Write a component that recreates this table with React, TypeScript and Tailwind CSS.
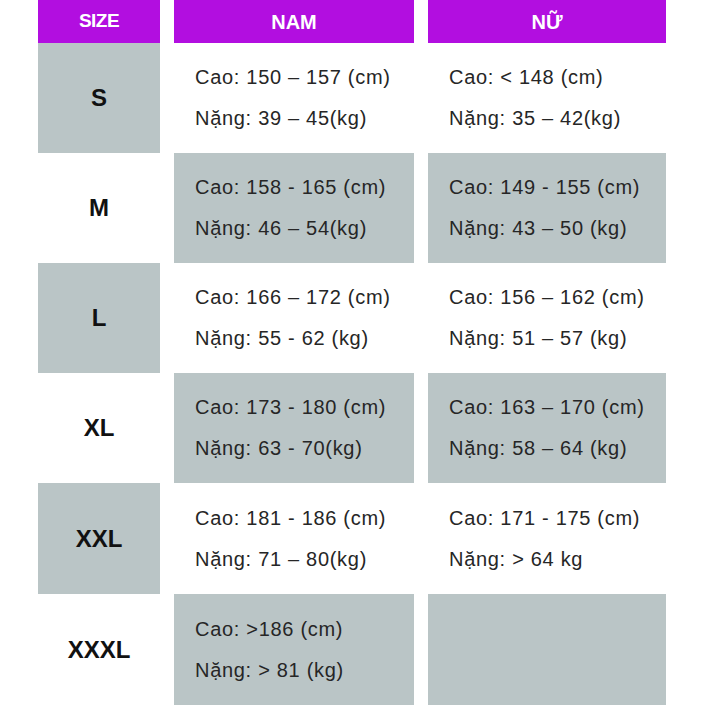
const rows = [
  { size: "S", sizeGray: true, nam: ["Cao: 150 – 157 (cm)", "Nặng: 39 – 45(kg)"], nu: ["Cao: < 148 (cm)", "Nặng: 35 – 42(kg)"] },
  { size: "M", sizeGray: false, nam: ["Cao: 158 - 165 (cm)", "Nặng: 46 – 54(kg)"], nu: ["Cao: 149 - 155 (cm)", "Nặng: 43 – 50 (kg)"] },
  { size: "L", sizeGray: true, nam: ["Cao: 166 – 172 (cm)", "Nặng: 55 - 62 (kg)"], nu: ["Cao: 156 – 162 (cm)", "Nặng: 51 – 57 (kg)"] },
  { size: "XL", sizeGray: false, nam: ["Cao: 173 - 180 (cm)", "Nặng: 63 - 70(kg)"], nu: ["Cao: 163 – 170 (cm)", "Nặng: 58 – 64 (kg)"] },
  { size: "XXL", sizeGray: true, nam: ["Cao: 181 - 186 (cm)", "Nặng: 71 – 80(kg)"], nu: ["Cao: 171 - 175 (cm)", "Nặng: > 64 kg"] },
  { size: "XXXL", sizeGray: false, nam: ["Cao: >186 (cm)", "Nặng: > 81 (kg)"], nu: [] as string[] },
];

function Cell({ lines, gray }: { lines: string[]; gray: boolean }) {
  return (
    <div
      className={`flex flex-col justify-center pl-[21px] text-[20px] leading-[41px] tracking-[0.7px] text-[#262626] ${
        gray ? "bg-[#bac5c6]" : "bg-white"
      }`}
    >
      {lines.map((l) => (
        <div key={l}>{l}</div>
      ))}
    </div>
  );
}

export default function App() {
  return (
    <div className="w-[705px] h-[705px] bg-white overflow-hidden px-[38px] font-['Liberation_Sans',Arial,sans-serif]">
      <div className="grid grid-cols-[122px_240px_238px] grid-rows-[43px_110px_110px_110px_110px_111px_111px] gap-x-[14px]">
        <div className="bg-[#b20ee0] flex items-center justify-center text-white font-bold text-[19px] tracking-[-0.5px]">
          SIZE
        </div>
        <div className="bg-[#b20ee0] flex items-center justify-center text-white font-bold text-[20px]">
          NAM
        </div>
        <div className="bg-[#b20ee0] flex items-center justify-center text-white font-bold text-[20px]">
          NỮ
        </div>
        {rows.map((r) => (
          <div key={r.size} className="contents">
            <div
              className={`flex items-center justify-center font-bold text-[24px] text-[#111] ${
                r.sizeGray ? "bg-[#bac5c6]" : "bg-white"
              }`}
            >
              {r.size}
            </div>
            <Cell lines={r.nam} gray={!r.sizeGray} />
            <Cell lines={r.nu} gray={!r.sizeGray} />
          </div>
        ))}
      </div>
    </div>
  );
}
